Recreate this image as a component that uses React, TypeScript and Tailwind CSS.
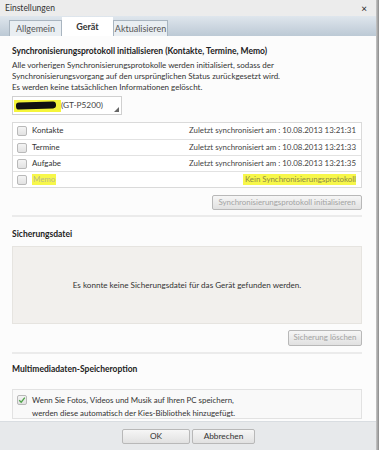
import React from 'react';

const FONT = { fontFamily: 'Lato, "Noto Sans", sans-serif' };

type Row = { label: string; status: string; highlight?: boolean };

const ROWS: Row[] = [
  { label: 'Kontakte', status: 'Zuletzt synchronisiert am : 10.08.2013 13:21:31' },
  { label: 'Termine', status: 'Zuletzt synchronisiert am : 10.08.2013 13:21:33' },
  { label: 'Aufgabe', status: 'Zuletzt synchronisiert am : 10.08.2013 13:21:35' },
  { label: 'Memo', status: 'Kein Synchronisierungsprotokoll', highlight: true },
];

function Box({ checked }: { checked?: boolean }) {
  return (
    <span className="flex h-[10px] w-[10px] shrink-0 items-center justify-center rounded-[2px] border border-[#b9b9b9] bg-gradient-to-b from-[#f4f4f4] to-[#e2e2e2]">
      {checked && (
        <svg width="8" height="8" viewBox="0 0 8 8">
          <path d="M1.2 4.2 L3.2 6.2 L6.8 1.6" fill="none" stroke="#4fa34a" strokeWidth="1.3" />
        </svg>
      )}
    </span>
  );
}

function Btn({ children, className = '', disabled }: { children: React.ReactNode; className?: string; disabled?: boolean }) {
  return (
    <div
      className={`flex items-center justify-center whitespace-nowrap rounded-[2px] border border-[#b8b8b8] bg-gradient-to-b from-[#f6f6f6] to-[#e1e1e1] text-[7.9px] ${
        disabled ? 'text-[#a3a3a3]' : 'text-[#333]'
      } ${className}`}
    >
      {children}
    </div>
  );
}

export default function App() {
  return (
    <div className="flex h-[450px] w-[379px] overflow-hidden bg-white text-[#222]" style={FONT}>
      <div className="flex w-[376px] flex-col">
        {/* title bar */}
        <div className="flex h-[16px] items-center justify-between bg-[#ececec] pl-[5px] pr-[9px] text-[8.5px] text-[#333]">
          <span>Einstellungen</span>
          <span className="text-[10px] leading-none text-[#222]">×</span>
        </div>

        {/* tabs */}
        <div className="flex h-[20px] items-end bg-gradient-to-b from-[#dfe6ed] to-[#bcc9d5] pl-[9px]">
          <div className="flex h-[16px] w-[53px] items-center justify-center border border-b-0 border-[#a9b5c0] bg-[#e9eef2] text-[9px] text-[#555]">
            Allgemein
          </div>
          <div className="flex h-[19px] w-[51px] items-center justify-center bg-white text-[9px] font-bold text-[#333]">
            Gerät
          </div>
          <div className="flex h-[16px] w-[55px] items-center justify-center border border-b-0 border-[#a9b5c0] bg-[#e9eef2] text-[9px] text-[#555]">
            Aktualisieren
          </div>
        </div>

        {/* content */}
        <div className="flex flex-1 flex-col bg-[#fcfcfc] px-[12px] pr-[14px] pt-[10px]">
          <div className="text-[8.5px] font-bold leading-[11px]">
            Synchronisierungsprotokoll initialisieren (Kontakte, Termine, Memo)
          </div>
          <div className="mt-[3px] text-[8px] leading-[11px] text-[#333]">
            Alle vorherigen Synchronisierungsprotokolle werden initialisiert, sodass der
            <br />
            Synchronisierungsvorgang auf den ursprünglichen Status zurückgesetzt wird.
            <br />
            Es werden keine tatsächlichen Informationen gelöscht.
          </div>

          {/* device select */}
          <div className="relative mt-[3px] flex h-[19px] w-[110px] items-center border border-[#d0d0d0] bg-white pl-[1px] text-[8.3px] text-[#444]">
            <span className="flex h-[12px] w-[47px] items-center bg-[#f5f53a] px-[2px]">
              <span className="h-[7px] w-[40px] -rotate-2 rounded-[3px] bg-[#111]" />
            </span>
            <span>(GT-P5200)</span>
            <svg className="absolute bottom-[2px] right-[2px]" width="5" height="5" viewBox="0 0 5 5">
              <path d="M5 0 L5 5 L0 5 Z" fill="#666" />
            </svg>
          </div>

          {/* table */}
          <div className="mt-[7px] border border-[#dadada] bg-white">
            {ROWS.map((r, i) => (
              <div
                key={r.label}
                className={`flex h-[16px] items-center pl-[4px] pr-[5px] text-[7.9px] ${i > 0 ? 'border-t border-[#e2e2e2]' : ''}`}
              >
                <Box />
                <span className={`ml-[5px] ${r.highlight ? 'bg-[#f7f74a] px-[1px] text-[#b9b78a]' : 'text-[#333]'}`}>
                  {r.label}
                </span>
                <span className={`ml-auto ${r.highlight ? 'bg-[#f7f74a] pl-[2px] text-[#8d8a45]' : 'text-[#444]'}`}>
                  {r.status}
                </span>
              </div>
            ))}
          </div>

          <div className="mt-[7px] flex justify-end">
            <Btn disabled className="h-[15px] w-[150px]">
              Synchronisierungsprotokoll initialisieren
            </Btn>
          </div>

          <div className="mt-[5px] h-[2px] bg-[#ebebeb]" />

          <div className="mt-[12px] text-[8.5px] font-bold leading-[11px]">Sicherungsdatei</div>
          <div className="mt-[6px] flex h-[78px] items-center justify-center border border-[#e6e4e0] bg-[#f2f0ed] text-[8.1px] text-[#333]">
            Es konnte keine Sicherungsdatei für das Gerät gefunden werden.
          </div>
          <div className="mt-[6px] flex justify-end">
            <Btn disabled className="h-[16px] w-[74px]">
              Sicherung löschen
            </Btn>
          </div>

          <div className="mt-[6px] h-[2px] bg-[#ebebeb]" />

          <div className="mt-[10px] text-[8.5px] font-bold leading-[11px]">Multimediadaten-Speicheroption</div>
          <div className="mt-[14px] flex h-[30px] items-start border border-[#e2e2e2] bg-[#f9f9f9] pl-[4px] pt-[4px]">
            <span className="mt-[1px]">
              <Box checked />
            </span>
            <div className="ml-[5px] text-[7.9px] leading-[13px] text-[#333]">
              Wenn Sie Fotos, Videos und Musik auf Ihren PC speichern,
              <br />
              werden diese automatisch der Kies-Bibliothek hinzugefügt.
            </div>
          </div>
          <div className="flex-1" />
        </div>

        {/* footer */}
        <div className="flex h-[29px] items-center justify-center gap-[2px] border-t border-[#d9dde1] bg-[#e7e9eb] pl-[1px]">
          <Btn className="h-[15px] w-[68px] text-[8.3px]">OK</Btn>
          <Btn className="h-[15px] w-[63px] text-[8.3px]">Abbrechen</Btn>
        </div>
      </div>
      <div className="w-[3px] bg-gradient-to-r from-[#c8c8c8] to-[#8a8a8a]" />
    </div>
  );
}
